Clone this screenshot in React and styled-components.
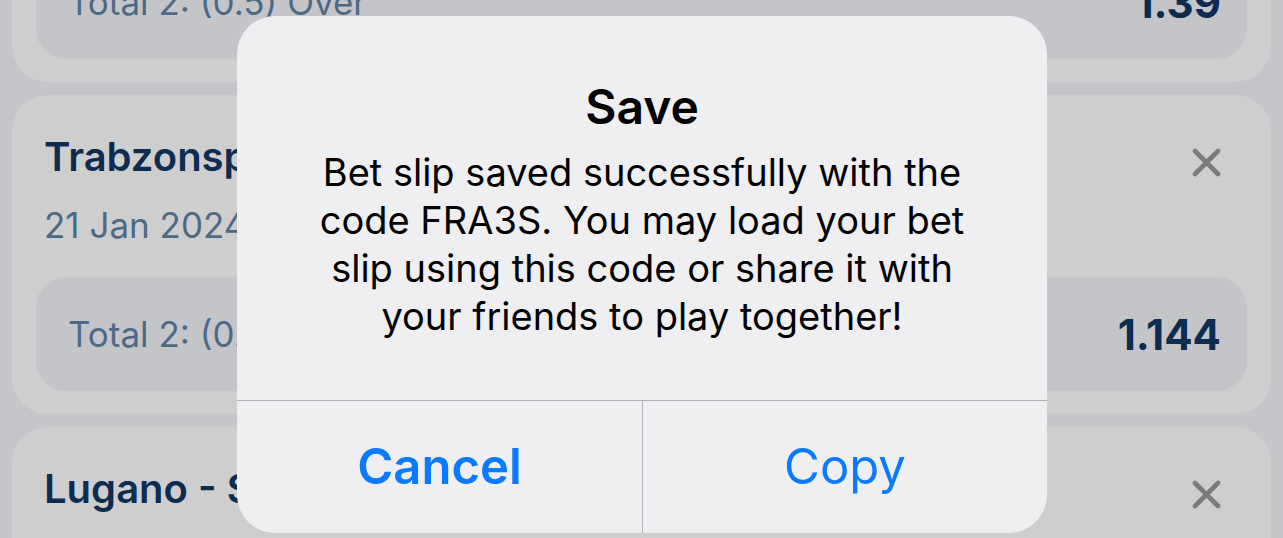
import React from "react";
import styled, { createGlobalStyle } from "styled-components";

const Global = createGlobalStyle`
  html, body { margin: 0; padding: 0; }
  body {
    background: #c5c6ca;
    font-family: Inter, "Noto Sans", "Liberation Sans", sans-serif;
    -webkit-font-smoothing: antialiased;
  }
`;

const Screen = styled.div`
  position: relative;
  width: 1283px;
  height: 538px;
  overflow: hidden;
  background: #c5c6ca;
`;

const List = styled.div`
  display: flex;
  flex-direction: column;
  gap: 13px;
  padding: 0 12px;
  margin-top: -237px;
`;

const Card = styled.div`
  background: #cececf;
  border-radius: 36px;
  padding: 38px 24px 23px;
  display: flex;
  flex-direction: column;
`;

const Header = styled.div`
  display: flex;
  align-items: center;
  justify-content: space-between;
  padding: 0 26px 0 8px;
`;

const Match = styled.div`
  font-size: 40px;
  line-height: 48px;
  font-weight: 600;
  color: #0c2d4f;
  white-space: nowrap;
`;

const Close = styled.button`
  border: 0;
  background: none;
  padding: 0;
  margin-top: 10px;
  width: 29px;
  height: 29px;
  display: flex;
  color: #7b7b7d;
`;

const DateLine = styled.div`
  margin-top: 22px;
  padding-left: 8px;
  font-size: 35px;
  line-height: 44px;
  color: #4c6a86;
`;

const Pick = styled.div`
  margin-top: 30px;
  height: 114px;
  border-radius: 30px;
  background: #c4c5c9;
  display: flex;
  align-items: center;
  justify-content: space-between;
  padding: 0 26px 0 32px;
`;

const Market = styled.span`
  font-size: 35px;
  color: #4c6a86;
  white-space: nowrap;
`;

const Odds = styled.span`
  font-size: 42px;
  font-weight: 700;
  color: #0c2d4f;
`;

const Alert = styled.div`
  position: absolute;
  left: 237px;
  top: 16px;
  width: 810px;
  height: 517px;
  background: #efeff1;
  border-radius: 38px;
  display: flex;
  flex-direction: column;
  overflow: hidden;
`;

const AlertContent = styled.div`
  flex: 1;
  padding: 63px 40px 0;
  display: flex;
  flex-direction: column;
  align-items: center;
  text-align: center;
`;

const AlertTitle = styled.div`
  font-size: 48px;
  line-height: 56px;
  font-weight: 600;
  color: #000;
`;

const AlertMessage = styled.div`
  margin-top: 13px;
  font-size: 38px;
  line-height: 48px;
  color: #000;
`;

const Actions = styled.div`
  height: 132px;
  border-top: 1px solid #b4b4b8;
  display: grid;
  grid-template-columns: 1fr 1fr;
`;

const Action = styled.button`
  border: 0;
  background: none;
  font-family: inherit;
  font-size: 49px;
  font-weight: ${(p) => (p.$primary ? 600 : 400)};
  color: #0a7aff;
  padding: 0 0 2px;
  & + & {
    border-left: 1px solid #b4b4b8;
  }
`;

const XIcon = () => (
  <svg width="29" height="29" viewBox="0 0 29 29">
    <path
      d="M3 3 L26 26 M26 3 L3 26"
      stroke="currentColor"
      strokeWidth="4.6"
      strokeLinecap="round"
    />
  </svg>
);

const bets = [
  { match: "Galatasaray - Istanbulspor", date: "20 Jan 2024, 20:00", market: "Total 2: (0.5) Over", odds: "1.39" },
  { match: "Trabzonspor - Fenerbahçe", date: "21 Jan 2024, 17:00", market: "Total 2: (0.5) Over", odds: "1.144" },
  { match: "Lugano - Servette", date: "21 Jan 2024, 16:30", market: "Total 2: (0.5) Over", odds: "1.21" },
];

export default function App() {
  return (
    <>
      <Global />
      <Screen>
        <List>
          {bets.map((b) => (
            <Card key={b.match}>
              <Header>
                <Match>{b.match}</Match>
                <Close aria-label="Remove">
                  <XIcon />
                </Close>
              </Header>
              <DateLine>{b.date}</DateLine>
              <Pick>
                <Market>{b.market}</Market>
                <Odds>{b.odds}</Odds>
              </Pick>
            </Card>
          ))}
        </List>
        <Alert role="alertdialog">
          <AlertContent>
            <AlertTitle>Save</AlertTitle>
            <AlertMessage>
              Bet slip saved successfully with the
              <br />
              code FRA3S. You may load your bet
              <br />
              slip using this code or share it with
              <br />
              your friends to play together!
            </AlertMessage>
          </AlertContent>
          <Actions>
            <Action $primary>Cancel</Action>
            <Action>Copy</Action>
          </Actions>
        </Alert>
      </Screen>
    </>
  );
}
